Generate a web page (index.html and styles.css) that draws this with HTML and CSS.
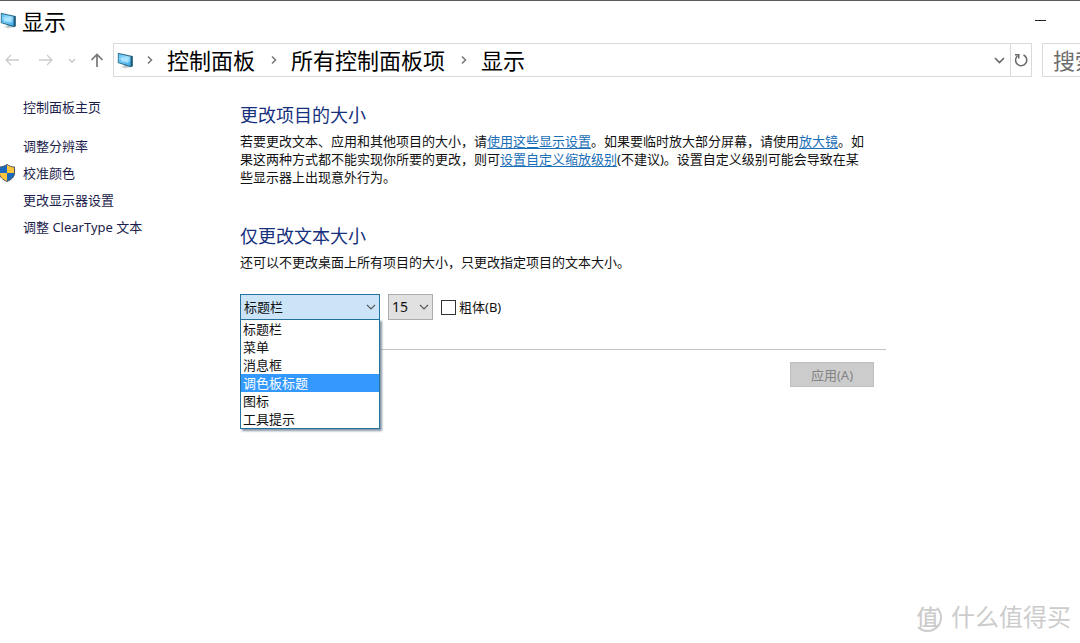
FILE: index.html
```html
<!DOCTYPE html>
<html lang="zh-CN">
<head>
<meta charset="utf-8">
<meta name="viewport" content="width=device-width, initial-scale=1">
<title>显示</title>
<link rel="stylesheet" href="styles.css">
</head>
<body>
<svg class="defs" aria-hidden="true">
  <defs>
    <linearGradient id="glass" x1="0" y1="0" x2="1" y2="1">
      <stop offset="0" stop-color="#58bdf2"/>
      <stop offset="0.5" stop-color="#a2e1ff"/>
      <stop offset="1" stop-color="#4bb2ee"/>
    </linearGradient>
    <symbol id="monitor" viewBox="0 0 17 17">
      <path d="M3.500 14.800 9 13.500l4.500 1.500-5 1.600z" fill="#ced3d7"/>
      <path d="M7.500 12.200l2.500.9-.8 1.800-2-.5z" fill="#a9b2b8"/>
      <path d="M.8 .8 15.600 4V14.300L13.600 15.200 .8 11z" fill="#33728f"/>
      <path d="M1.700 1.900 13.400 4.700V13.700L1.700 10.200z" fill="url(#glass)"/>
      <path d="M1.700 7.600 13.400 10V13.700L1.700 10.200z" fill="#229be6" opacity=".4"/>
      <path d="M4 5.200 11.500 6.600V11L4 9.200z" fill="#b5e8ff" opacity=".7"/>
      <path d="M14 4.500l1.600-.4v10.200l-1.600.7z" fill="#1c5774"/>
    </symbol>
    <symbol id="down" viewBox="0 0 10 6">
      <path d="M1 1l4 4 4-4" fill="none" stroke="currentColor" stroke-width="1.100"/>
    </symbol>
  </defs>
</svg>
<div class="window">
  <header>
    <div class="titlebar">
      <svg class="icon-app"><use href="#monitor"/></svg>
      <h1 class="title">显示</h1>
      <button class="minimize" type="button" aria-label="最小化"></button>
    </div>
    <div class="toolbar">
      <nav class="history" aria-label="导航">
        <button class="nav-btn faint" type="button" aria-label="后退"><svg width="14" height="12" viewBox="0 0 14 12"><path d="M14 6H1M6 1 1 6l5 5" fill="none" stroke="currentColor" stroke-width="1.300"/></svg></button>
        <button class="nav-btn faint" type="button" aria-label="前进"><svg width="14" height="12" viewBox="0 0 14 12"><path d="M0 6h13M8 1l5 5-5 5" fill="none" stroke="currentColor" stroke-width="1.300"/></svg></button>
        <button class="nav-btn small faint" type="button" aria-label="最近的位置"><svg width="8" height="5" viewBox="0 0 8 5"><path d="M1 1l3 3 3-3" fill="none" stroke="currentColor" stroke-width="1.600"/></svg></button>
        <button class="nav-btn up" type="button" aria-label="向上"><svg width="14" height="14" viewBox="0 0 14 14"><path d="M7 14V1.500M1.500 7 7 1.500 12.500 7" fill="none" stroke="currentColor" stroke-width="1.700"/></svg></button>
      </nav>
      <div class="address">
        <svg class="icon-address"><use href="#monitor"/></svg>
        <ol class="crumbs">
          <li><svg class="sep" viewBox="0 0 6 8"><path d="M1 0.500 4.500 4 1 7.500" fill="none" stroke="currentColor" stroke-width="1.500"/></svg><a href="#">控制面板</a></li>
          <li><svg class="sep" viewBox="0 0 6 8"><path d="M1 0.500 4.500 4 1 7.500" fill="none" stroke="currentColor" stroke-width="1.500"/></svg><a href="#">所有控制面板项</a></li>
          <li><svg class="sep" viewBox="0 0 6 8"><path d="M1 0.500 4.500 4 1 7.500" fill="none" stroke="currentColor" stroke-width="1.500"/></svg><a href="#">显示</a></li>
        </ol>
        <button class="addr-btn" type="button" aria-label="以前的位置"><svg width="11" height="7" viewBox="0 0 11 7"><path d="M1 1l4.500 4.500L10 1" fill="none" stroke="currentColor" stroke-width="1.600"/></svg></button>
        <button class="addr-btn refresh" type="button" aria-label="刷新"><svg width="14" height="14" viewBox="0 0 14 14"><path d="M9.500 2A5.600 5.600 0 1 1 3.500 2.800" fill="none" stroke="currentColor" stroke-width="1.500"/><path d="M1 1.700h3.800v3.800" fill="none" stroke="currentColor" stroke-width="1.500"/></svg></button>
      </div>
      <input class="search" type="text" placeholder="搜索控制面板" aria-label="搜索控制面板">
    </div>
  </header>
  <div class="body">
    <aside class="sidebar">
      <a href="#">控制面板主页</a>
      <ul class="tasks">
        <li><a href="#">调整分辨率</a></li>
        <li class="shielded">
          <svg class="shield" viewBox="0 0 16 18">
            <path d="M8 .5C5.500 2.300 3 3 .5 3v6c0 4 3 6.500 7.500 8.500C12.500 15.500 15.500 13 15.500 9V3C13 3 10.500 2.300 8 .5z" fill="#fbc63c"/>
            <path d="M8 .5C5.500 2.300 3 3 .5 3v6H8zM8 9h7.500c0 4-3 6.500-7.500 8.500z" fill="#1769c0"/>
            <path d="M8 .5C5.500 2.300 3 3 .5 3v6c0 4 3 6.500 7.500 8.500C12.500 15.500 15.500 13 15.500 9V3C13 3 10.500 2.300 8 .5z" fill="none" stroke="#4c5360"/>
          </svg>
          <a href="#">校准颜色</a>
        </li>
        <li><a href="#">更改显示器设置</a></li>
        <li><a href="#">调整 ClearType 文本</a></li>
      </ul>
    </aside>
    <main class="content">
      <section class="block">
        <h2>更改项目的大小</h2>
        <p>若要更改文本、应用和其他项目的大小，请<a href="#">使用这些显示设置</a>。如果要临时放大部分屏幕，请使用<a href="#">放大镜</a>。如果这两种方式都不能实现你所要的更改，则可<a href="#">设置自定义缩放级别</a>(不建议)。设置自定义级别可能会导致在某些显示器上出现意外行为。</p>
      </section>
      <section class="block">
        <h2>仅更改文本大小</h2>
        <p>还可以不更改桌面上所有项目的大小，只更改指定项目的文本大小。</p>
        <form class="controls">
          <div class="combo item-combo">
            <select aria-label="项目">
              <option selected>标题栏</option><option>菜单</option><option>消息框</option><option>调色板标题</option><option>图标</option><option>工具提示</option>
            </select>
            <svg class="chevron"><use href="#down"/></svg>
            <ul class="options" role="listbox" aria-label="项目">
              <li role="option">标题栏</li>
              <li role="option">菜单</li>
              <li role="option">消息框</li>
              <li role="option" class="active" aria-selected="true">调色板标题</li>
              <li role="option">图标</li>
              <li role="option">工具提示</li>
            </ul>
          </div>
          <div class="combo size-combo">
            <select aria-label="字号"><option>15</option></select>
            <svg class="chevron"><use href="#down"/></svg>
          </div>
          <label class="bold"><input type="checkbox">粗体(B)</label>
        </form>
      </section>
      <footer class="actions"><button type="button" class="apply" disabled>应用(A)</button></footer>
    </main>
  </div>
  <div class="watermark">
    <span class="mark">值</span>
    <span>什么值得买</span>
  </div>
</div>
</body>
</html>
```

FILE: styles.css
```css
* { box-sizing: border-box; }

body {
  margin: 0;
  overflow: hidden;
  background: #fff;
  color: #111;
  font: 13px/18px "Noto Sans", "Noto Sans CJK SC", sans-serif;
}

h1, h2, p, ul, ol { margin: 0; padding: 0; font-weight: 400; }
ul, ol { list-style: none; }
button, input, select { font: inherit; color: inherit; }
svg { display: block; flex: none; }
.defs { position: absolute; width: 0; height: 0; }

.window {
  position: relative;
  min-height: 100vh;
  overflow: hidden;
  border-top: 1px solid #5c5c5c;
}

.titlebar {
  display: flex;
  align-items: center;
  height: 39px;
  gap: 5px;
  padding-right: 34px;
}
.icon-app, .icon-address { width: 17px; height: 17px; }
.title { font-size: 22px; line-height: 32px; color: #000; }
.minimize {
  width: 12px;
  height: 12px;
  margin-left: auto;
  padding: 0;
  border: 0;
  background: linear-gradient(#222, #222) center 5px / 11px 1px no-repeat;
}

.toolbar { display: flex; height: 37px; padding-top: 3px; }
.history { display: flex; align-items: center; width: 113px; flex: none; padding-left: 5px; }
.nav-btn {
  display: flex;
  justify-content: center;
  width: 34px;
  padding: 0;
  border: 0;
  background: none;
  color: #777;
}
.nav-btn:first-child { width: 14px; margin-right: 10px; }
.nav-btn.small { width: 20px; }
.nav-btn.up { width: 32px; }
.nav-btn.faint { color: #ccc; }

.address {
  display: flex;
  flex: 1;
  align-items: center;
  min-width: 0;
  padding-left: 3px;
  border: 1px solid #d9d9d9;
}
.crumbs { display: flex; flex: 1; gap: 1px; overflow: hidden; margin-left: -2px; }
.crumbs li { display: flex; align-items: center; white-space: nowrap; }
.crumbs a { color: #000; font-size: 22px; line-height: 30px; text-decoration: none; }
.sep { width: 6px; height: 8px; margin: 0 14px 0 15px; color: #777; }
.addr-btn {
  display: flex;
  align-items: center;
  justify-content: center;
  width: 21px;
  height: 32px;
  padding: 0;
  border: 0;
  background: none;
  color: #666;
}
.refresh { border-left: 1px solid #d9d9d9; }

/* The search box runs past the right edge of the window. */
.search {
  width: 160px;
  flex: none;
  margin: 0 -122px 0 10px;
  padding: 0 0 0 10px;
  border: 1px solid #d9d9d9;
  border-radius: 0;
  background: #fff;
  font-size: 22px;
  outline: 0;
}
.search::placeholder { color: #6d6d6d; opacity: 1; }

.body { display: grid; grid-template-columns: 240px minmax(0, 646px); }
.sidebar { padding: 17px 0 0 23px; line-height: 27px; }
.sidebar a { color: #1d1d4c; text-decoration: none; }
.tasks { padding-top: 12px; }
.shielded { position: relative; }
.shield { position: absolute; left: -24px; top: 4px; width: 16px; height: 18px; }

.content { padding-top: 26px; }
.block { margin-bottom: 38px; }
.block h2 { margin-bottom: 5px; color: #15317e; font-size: 18px; line-height: 24px; }
.block p { max-width: 630px; }
.block p a { color: #1a6fb8; text-underline-offset: 2px; text-decoration-skip-ink: none; }

.controls { display: flex; align-items: center; padding-top: 23px; }
.combo { position: relative; height: 26px; }
.combo select {
  appearance: none;
  width: 100%;
  height: 100%;
  padding: 0 3px;
  border: 1px solid #adadad;
  border-radius: 0;
  background: #e1e1e1;
}
.item-combo { width: 140px; margin-right: 8px; }
.item-combo select { border-color: #2272a0; background: #cce4f7; }
.size-combo { width: 45px; margin-right: 8px; }
.size-combo select { font-size: 14px; }
.chevron {
  position: absolute;
  right: 4px;
  top: 10px;
  width: 10px;
  height: 6px;
  color: #555;
  pointer-events: none;
}
.options {
  position: absolute;
  top: 100%;
  left: 0;
  right: 0;
  z-index: 2;
  margin-top: -1px;
  border: 1px solid #2272a0;
  background: #fff;
  box-shadow: 2px 2px 2px #8796a6;
}
.options li { padding-left: 2px; }
.options .active { background: #3399ff; color: #fff; }

.bold { display: flex; align-items: center; gap: 3px; }
.bold input {
  appearance: none;
  width: 15px;
  height: 15px;
  margin: 0;
  border: 1px solid #333;
  background: #fff;
}

.actions {
  display: flex;
  justify-content: flex-end;
  margin-top: -9px;
  padding: 12px 12px 0 0;
  border-top: 1px solid #c3c3c3;
}
.apply {
  width: 84px;
  height: 25px;
  padding: 0;
  border: 1px solid #bfbfbf;
  background: #ccc;
  color: #838383;
}

.watermark {
  position: absolute;
  right: 9px;
  bottom: 10px;
  display: flex;
  align-items: center;
  gap: 9px;
  color: #ccc;
  font-size: 24px;
  line-height: 32px;
}
.mark {
  width: 29px;
  height: 29px;
  border: 2px solid #ccc;
  border-top-color: transparent;
  border-left-color: transparent;
  border-radius: 50%;
  font-size: 22px;
  font-weight: 500;
  line-height: 22px;
  text-align: center;
}
```
